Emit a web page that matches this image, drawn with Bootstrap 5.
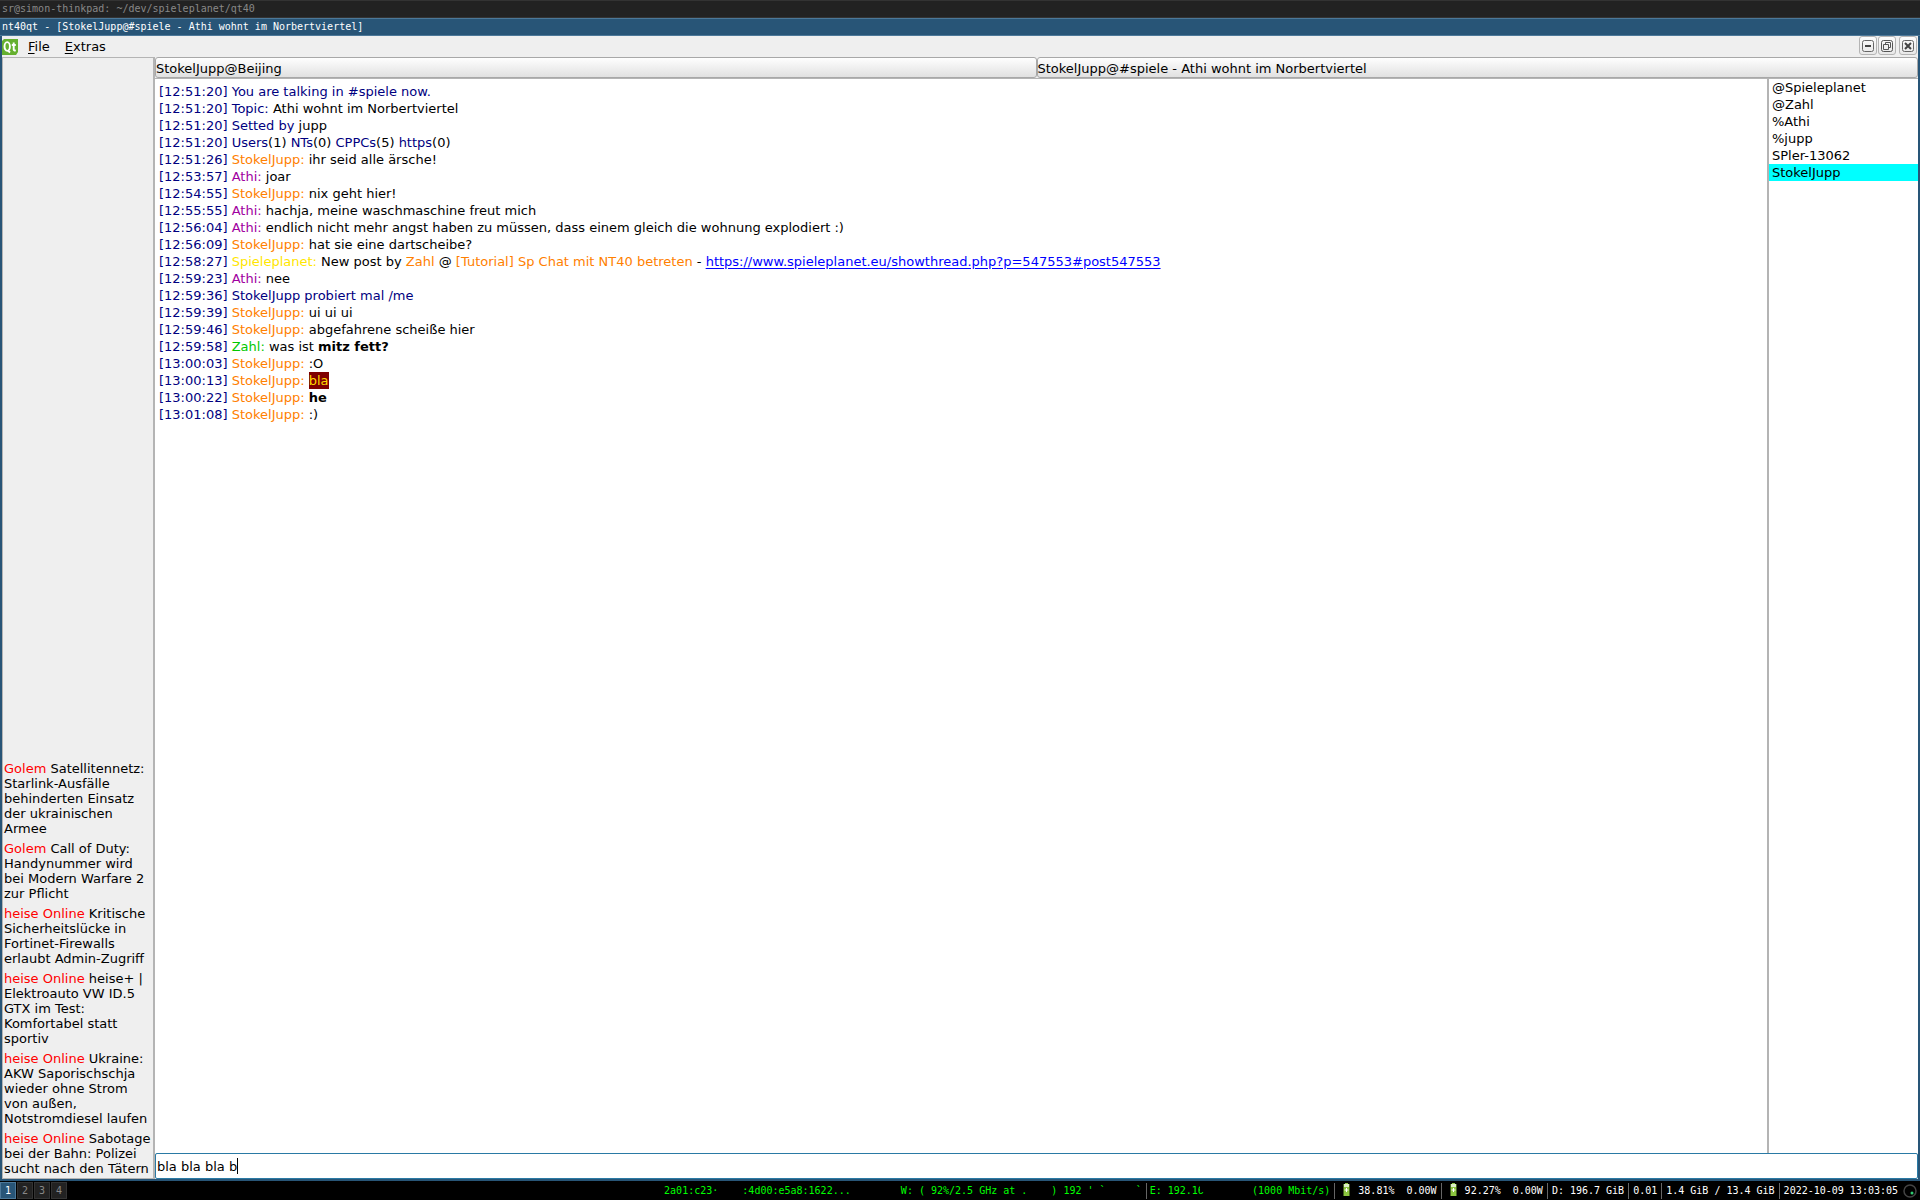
<!DOCTYPE html>
<html lang="de">
<head>
<meta charset="utf-8">
<meta name="viewport" content="width=device-width, initial-scale=1">
<title>nt40qt</title>
<link rel="stylesheet" href="https://cdn.jsdelivr.net/npm/bootstrap@5.3.0/dist/css/bootstrap.min.css">
<style>
body{font-family:"DejaVu Sans",sans-serif;font-size:13px;line-height:17px;color:#000;background:#285577}
.mono{font-family:"DejaVu Sans Mono",monospace;font-size:10px;line-height:16px}
.titleline{height:18px;padding:0 2px;border:1px solid #333;border-width:1px 0;background:#222;color:#888}
.titleline.current{border-color:#4c7899;background:#285577;color:#fff}
.appwin{margin:0 2px 2px;background:#efefef}
.menubar{height:21px}
.menubar .entrybtn{border:0;background:none;padding:0 0 0 15px;color:#000}
.menubar .entrybtn:first-of-type{padding-left:10px}
.menubar u{text-underline-offset:2px}
.winbtns{gap:1px;padding-right:1px}
.winbtns button{width:18px;height:19px;padding:0;border:1px solid #b4b4b4;border-radius:3px;background:linear-gradient(#fdfdfd,#e8e8e8);display:flex;align-items:center;justify-content:center}
.winbtns button:last-child{margin-left:2px}
.feeds{width:153px;padding:0 0 2px 1px;border:1px solid #b4b4b4;border-width:1px 2px 1px 1px;line-height:15px}
.feeds p{margin:0 0 5px}
.feeds p:last-child{margin:0}
.feeds a{color:red;text-decoration:none}
.tabrow{height:22px;border-bottom:1px solid #b4b4b4}
.tabrow button{height:21px;border:1px solid #a8a8a8;border-radius:3px;background:linear-gradient(#fefefe,#e1e1e1);padding:2px 0 0;text-align:left;color:#000;line-height:17px}
.chatlog{background:#fff;padding:4px}
.userlist{width:151px;background:#fff;border-left:2px solid #b4b4b4;margin:0}
.userlist li{padding:0 3px}
.userlist .chosen{background:#0ff}
.sys,time{color:#000080}
.me{color:#ff8000}.athi{color:#a000a0}.planet{color:#ffe600}.zahl{color:#00c800}
.marked{background:#7f0000;color:#ffd800;line-height:17px}
.chatlog a{color:#00f;text-underline-offset:2px}
.entry{height:26px;border:1px solid #2a7aa5;border-radius:2px;padding:0 1px;background:#fff;color:#000;outline:0;width:100%;display:block;line-height:24px;caret-color:transparent}
.caret{left:82px;top:5px;width:1px;height:16px;background:#000}
.bar{height:19px;background:#000;color:#fff}
.bar .ws{width:16px;height:17px;padding:0;border:1px solid #333;background:#222;color:#888;line-height:15px;margin-right:1px}
.bar .ws.on{border-color:#4c7899;background:#285577;color:#fff}
.ok{color:#0f0}
.seg{white-space:pre}
.seg+.seg{border-left:1px solid #666;margin-left:4px;padding-left:4px}
.seg+.seg.ok{padding-left:3px}
.seg.nosep{border-left-color:transparent}
.cell{margin:0 8px 0 4px;vertical-align:-2px}
.cut::after{content:"";position:absolute;left:2px;right:0;top:0;height:7px;background:#000}
.tray{margin:0 3px 0 5px}
</style>
<script src="https://cdn.jsdelivr.net/npm/bootstrap@5.3.0/dist/js/bootstrap.bundle.min.js"></script>
</head>
<body class="vh-100 d-flex flex-column overflow-hidden">
<div class="mono titleline text-nowrap">sr@simon-thinkpad: ~/dev/spieleplanet/qt40</div>
<div class="mono titleline current text-nowrap">nt40qt - [StokelJupp@#spiele - Athi wohnt im Norbertviertel]</div>
<div class="appwin flex-fill d-flex flex-column">
  <nav class="menubar d-flex align-items-center">
    <svg width="16" height="16" viewBox="0 0 16 16" role="img" aria-label="Qt"><path d="M2 0H16V13L14 16H0V2Z" fill="#65b02f"/><ellipse cx="5.2" cy="7.5" rx="2.7" ry="4.4" fill="none" stroke="#fff" stroke-width="1.9"/><path d="M6 11.5 8 13.5M11.7 3.500V10.500Q11.700 11.800 13.800 11.400M9.800 6H13.800" fill="none" stroke="#fff" stroke-width="1.9"/></svg>
    <button type="button" class="entrybtn"><u>F</u>ile</button><button type="button" class="entrybtn"><u>E</u>xtras</button>
    <div class="winbtns d-flex ms-auto align-self-start">
      <button type="button" aria-label="Minimize"><svg class="flex-shrink-0" width="12" height="12" fill="none" stroke="#666"><rect x=".5" y=".5" width="11" height="11" rx="2"/><path d="M3 6H9" stroke="#444" stroke-width="2"/></svg></button>
      <button type="button" aria-label="Restore"><svg class="flex-shrink-0" width="12" height="12" fill="none" stroke="#555"><rect x=".5" y=".5" width="11" height="11" rx="2"/><path d="M4.500 4.500V2.500H9.500V7.500H7.500M2.500 4.500H7.500V9.500H2.500Z"/></svg></button>
      <button type="button" aria-label="Close"><svg class="flex-shrink-0" width="12" height="12" fill="none" stroke="#666"><rect x=".5" y=".5" width="11" height="11" rx="2"/><path d="M3 3 9 9M9 3 3 9" stroke="#444" stroke-width="2"/></svg></button>
    </div>
  </nav>
  <div class="d-flex flex-fill">
    <aside class="feeds d-flex flex-column justify-content-end flex-shrink-0">
      <p><a href="#">Golem</a> Satellitennetz: Starlink-Ausfälle behinderten Einsatz der ukrainischen Armee</p>
      <p><a href="#">Golem</a> Call of Duty: Handynummer wird bei Modern Warfare 2 zur Pflicht</p>
      <p><a href="#">heise Online</a> Kritische Sicherheitslücke in Fortinet-Firewalls erlaubt Admin-Zugriff</p>
      <p><a href="#">heise Online</a> heise+ | Elektroauto VW ID.5 GTX im Test: Komfortabel statt sportiv</p>
      <p><a href="#">heise Online</a> Ukraine: AKW Saporischschja wieder ohne Strom von außen, Notstromdiesel laufen</p>
      <p><a href="#">heise Online</a> Sabotage bei der Bahn: Polizei sucht nach den Tätern</p>
    </aside>
    <main class="flex-fill d-flex flex-column">
      <div class="tabrow d-flex"><button class="w-50" type="button">StokelJupp@Beijing</button><button class="w-50" type="button">StokelJupp@#spiele - Athi wohnt im Norbertviertel</button></div>
      <div class="d-flex flex-fill">
        <div class="chatlog flex-fill">
          <div><time>[12:51:20]</time> <span class="sys">You are talking in #spiele now.</span></div>
          <div><time>[12:51:20]</time> <span class="sys">Topic:</span> Athi wohnt im Norbertviertel</div>
          <div><time>[12:51:20]</time> <span class="sys">Setted by</span> jupp</div>
          <div><time>[12:51:20]</time> <span class="sys">Users</span>(1) <span class="sys">NTs</span>(0) <span class="sys">CPPCs</span>(5) <span class="sys">https</span>(0)</div>
          <div><time>[12:51:26]</time> <span class="me">StokelJupp:</span> ihr seid alle ärsche!</div>
          <div><time>[12:53:57]</time> <span class="athi">Athi:</span> joar</div>
          <div><time>[12:54:55]</time> <span class="me">StokelJupp:</span> nix geht hier!</div>
          <div><time>[12:55:55]</time> <span class="athi">Athi:</span> hachja, meine waschmaschine freut mich</div>
          <div><time>[12:56:04]</time> <span class="athi">Athi:</span> endlich nicht mehr angst haben zu müssen, dass einem gleich die wohnung explodiert :)</div>
          <div><time>[12:56:09]</time> <span class="me">StokelJupp:</span> hat sie eine dartscheibe?</div>
          <div><time>[12:58:27]</time> <span class="planet">Spieleplanet:</span> New post by <span class="me">Zahl</span> @ <span class="me">[Tutorial] Sp Chat mit NT40 betreten</span> - <a href="#">https://www.spieleplanet.eu/showthread.php?p=547553#post547553</a></div>
          <div><time>[12:59:23]</time> <span class="athi">Athi:</span> nee</div>
          <div><time>[12:59:36]</time> <span class="sys">StokelJupp probiert mal /me</span></div>
          <div><time>[12:59:39]</time> <span class="me">StokelJupp:</span> ui ui ui</div>
          <div><time>[12:59:46]</time> <span class="me">StokelJupp:</span> abgefahrene scheiße hier</div>
          <div><time>[12:59:58]</time> <span class="zahl">Zahl:</span> was ist <b>mitz fett?</b></div>
          <div><time>[13:00:03]</time> <span class="me">StokelJupp:</span> :O</div>
          <div><time>[13:00:13]</time> <span class="me">StokelJupp:</span> <span class="marked d-inline-block">bla</span></div>
          <div><time>[13:00:22]</time> <span class="me">StokelJupp:</span> <b>he</b></div>
          <div><time>[13:01:08]</time> <span class="me">StokelJupp:</span> :)</div>
        </div>
        <ul class="userlist list-unstyled flex-shrink-0"><li>@Spieleplanet</li><li>@Zahl</li><li>%Athi</li><li>%jupp</li><li>SPler-13062</li><li class="chosen">StokelJupp</li></ul>
      </div>
      <div class="position-relative"><input class="entry" aria-label="Nachricht" value="bla bla bla b"><span class="caret position-absolute"></span></div>
    </main>
  </div>
</div>
<footer class="bar mono d-flex align-items-center">
  <button type="button" class="ws on">1</button><button type="button" class="ws">2</button><button type="button" class="ws">3</button><button type="button" class="ws">4</button>
  <div class="ms-auto d-flex"><span class="seg ok">2a01:c23·    :4d00:e5a8:1622...       </span><span class="seg ok nosep">W: ( 92%/2.5 GHz at .    ) 192 ' `     `</span><span class="seg ok">E: 192.1<span class="cut position-relative">6</span>        (1000 Mbit/s)</span><span class="seg"><svg class="cell" width="7" height="13"><path d="M2 0H5V1H6.500V13H.5V1H2Z" fill="#8cc63f"/><path d="M1 1H6V4H1Z" fill="#dcedc8"/><path d="M3.500 5V9M1.500 7H5.500" stroke="#fff"/></svg>38.81%  0.00W</span><span class="seg"><svg class="cell" width="7" height="13"><path d="M2 0H5V1H6.500V13H.5V1H2Z" fill="#8cc63f"/><path d="M1 1H6V4H1Z" fill="#dcedc8"/><path d="M3.500 5V9M1.500 7H5.500" stroke="#fff"/></svg>92.27%  0.00W</span><span class="seg">D: 196.7 GiB</span><span class="seg">0.01</span><span class="seg">1.4 GiB / 13.4 GiB</span><span class="seg">2022-10-09 13:03:05</span></div>
  <svg class="tray" width="14" height="14"><circle cx="7" cy="7" r="6" fill="none" stroke="#444" stroke-width="1.5"/><circle cx="9" cy="9" r="1.500" fill="#2ecc71"/></svg>
</footer>
</body>
</html>
